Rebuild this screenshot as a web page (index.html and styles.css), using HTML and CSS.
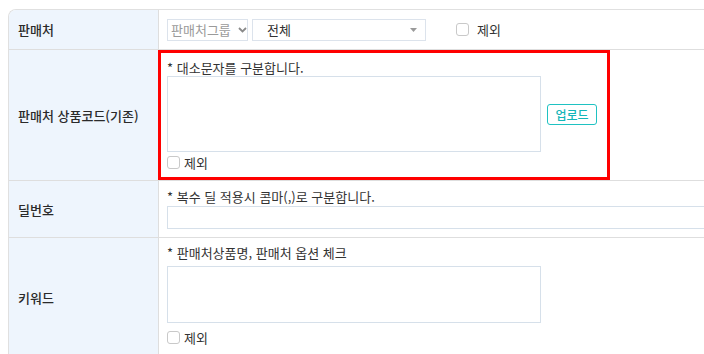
FILE: index.html
```html
<!DOCTYPE html>
<html lang="ko">
<head>
<meta charset="utf-8">
<title>판매처 검색</title>
<link rel="stylesheet" href="styles.css">
</head>
<body>
<div class="form">
  <div class="row row-seller">
    <div class="label">판매처</div>
    <div class="cell cell-inline">
      <div class="select select-group">
        <span>판매처그룹</span>
        <svg class="chev" width="9" height="6" viewBox="0 0 9 6"><path d="M1 1 L4.5 4.5 L8 1" fill="none" stroke="#8a8a8a" stroke-width="1.8"/></svg>
      </div>
      <div class="select select-all">
        <span>전체</span>
        <svg class="tri" width="7" height="4" viewBox="0 0 7 4"><path d="M0 0 H7 L3.5 4 Z" fill="#9a9a9a"/></svg>
      </div>
      <label class="check check-wide"><span class="box"></span><span>제외</span></label>
    </div>
  </div>

  <div class="row row-code">
    <div class="label">판매처 상품코드(기존)</div>
    <div class="cell cell-stack">
      <div class="hint">* 대소문자를 구분합니다.</div>
      <div class="area-line">
        <div class="textarea area-code"></div>
        <button class="upload">업로드</button>
      </div>
      <label class="check check-under"><span class="box"></span><span>제외</span></label>
      <div class="highlight"></div>
    </div>
  </div>

  <div class="row row-deal">
    <div class="label">딜번호</div>
    <div class="cell cell-stack">
      <div class="hint">* 복수 딜 적용시 콤마(,)로 구분합니다.</div>
      <div class="input-long"></div>
    </div>
  </div>

  <div class="row row-keyword">
    <div class="label">키워드</div>
    <div class="cell cell-stack">
      <div class="hint">* 판매처상품명, 판매처 옵션 체크</div>
      <div class="textarea area-keyword"></div>
      <label class="check check-under2"><span class="box"></span><span>제외</span></label>
    </div>
  </div>
</div>
</body>
</html>
```
FILE: styles.css
```css
html, body {
  overflow: hidden;
}
body {
  margin: 9px 0 0 8px;
  background: #fff;
  font-family: "Noto Sans CJK KR", "Noto Sans", sans-serif;
  font-size: 13px;
  color: #333;
}
.form {
  width: 740px;
  border-top: 1px solid #e0e0e0;
  border-left: 1px solid #e0e0e0;
  border-top-left-radius: 8px;
  overflow: hidden;
}
.row {
  display: grid;
  grid-template-columns: 150px 1fr;
  border-bottom: 1px solid #dedede;
}
.label {
  background: #eef5fd;
  border-right: 1px solid #dedede;
  display: flex;
  align-items: center;
  padding-left: 9px;
  font-size: 13px;
  font-weight: 500;
  color: #2a2a2a;
}
.cell {
  padding-left: 8px;
  position: relative;
}
.cell-inline {
  display: flex;
  align-items: center;
  height: 39px;
}
.select {
  height: 22px;
  box-sizing: border-box;
  border: 1px solid #dce3ec;
  display: flex;
  align-items: center;
  background: #fff;
}
.select-group {
  width: 81px;
  padding-left: 3px;
  color: #9a9a9a;
}
.select-group .chev {
  margin-left: 7px;
}
.select-all {
  width: 174px;
  margin-left: 4px;
  padding-left: 14px;
  color: #333;
  justify-content: space-between;
  padding-right: 8px;
}
.check {
  display: flex;
  align-items: center;
  height: 17px;
  line-height: 17px;
}
.box {
  width: 13px;
  height: 13px;
  box-sizing: border-box;
  border: 1px solid #c9c9c9;
  border-radius: 3px;
  background: #fff;
  margin-right: 4px;
}
.check-wide {
  margin-left: 30px;
}
.check-wide .box {
  margin-right: 8px;
}
.cell-stack {
  display: flex;
  flex-direction: column;
}
.hint {
  line-height: 17px;
  height: 17px;
}
.textarea {
  width: 374px;
  box-sizing: border-box;
  border: 1px solid #d6e0ea;
  background: #fff;
}
.row-code .cell {
  padding-top: 9px;
  padding-bottom: 9px;
}
.area-line {
  display: flex;
  align-items: center;
}
.area-code {
  height: 76px;
}
.upload {
  margin-left: 6px;
  width: 50px;
  height: 21px;
  box-sizing: border-box;
  border: 1px solid #1fc2c2;
  border-radius: 3px;
  background: #fff;
  color: #14b6b8;
  font-family: inherit;
  font-size: 12px;
  font-weight: 500;
  padding: 0;
  line-height: 19px;
}
.check-under {
  margin-top: 2px;
}
.highlight {
  position: absolute;
  left: -1px;
  top: 0;
  width: 452px;
  height: 130px;
  box-sizing: border-box;
  border: 3px solid #ff0000;
  pointer-events: none;
}
.row-deal .cell {
  padding-top: 7px;
  padding-bottom: 8px;
}
.input-long {
  margin-top: 1px;
  height: 23px;
  box-sizing: border-box;
  border: 1px solid #d6e0ea;
  width: 600px;
}
.row-keyword .cell {
  padding-top: 6px;
  padding-bottom: 10px;
}
.area-keyword {
  margin-top: 5px;
  height: 57px;
}
.check-under2 {
  margin-top: 6px;
}
```
